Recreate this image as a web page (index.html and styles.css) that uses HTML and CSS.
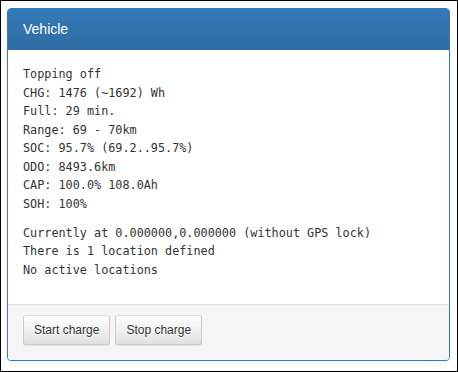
FILE: index.html
```html
<!DOCTYPE html>
<html lang="en">
<head>
    <meta charset="UTF-8">
    <meta name="viewport" content="width=device-width, initial-scale=1.0">
    <title>Vehicle</title>
    <link rel="stylesheet" href="styles.css">
</head>
<body>

<div class="frame">
    <div class="panel">
        <div class="panel-heading">
            <h3 class="panel-title">Vehicle</h3>
        </div>
        <div class="panel-body">
            <p>Topping off<br>
CHG: 1476 (~1692) Wh<br>
Full: 29 min.<br>
Range: 69 - 70km<br>
SOC: 95.7% (69.2..95.7%)<br>
ODO: 8493.6km<br>
CAP: 100.0% 108.0Ah<br>
SOH: 100%</p>
            <p>Currently at 0.000000,0.000000 (without GPS lock)<br>
There is 1 location defined<br>
No active locations</p>
        </div>
        <div class="panel-footer">
            <button class="btn">Start charge</button>
            <button class="btn">Stop charge</button>
        </div>
    </div>
</div>

</body>
</html>
```

FILE: styles.css
```css
* {
    box-sizing: border-box;
}
body {
    margin: 0;
    font-family: "Liberation Sans", Arial, sans-serif;
    color: #333;
    background-color: #fff;
}
.frame {
    width: 458px;
    height: 372px;
    border: 1px solid #000;
    padding: 7px 7px 10px 6px;
}
.panel {
    border: 1px solid #337ab7;
    border-radius: 4px;
    background-color: #fff;
    box-shadow: 0 1px 1px rgba(0, 0, 0, 0.05);
    overflow: hidden;
}
.panel-heading {
    padding: 10px 15px;
    color: #fff;
    background-image: linear-gradient(to bottom, #337ab7 0, #2e6da4 100%);
}
.panel-title {
    margin: 0;
    font-size: 14px;
    font-weight: normal;
    line-height: 21px;
}
.panel-body {
    padding: 15px;
    font-family: "DejaVu Sans Mono", "Liberation Mono", monospace;
    font-size: 11.8px;
    line-height: 18.57px;
}
.panel-body p {
    margin: 0 0 10px;
    white-space: nowrap;
}
.panel-footer {
    display: flex;
    gap: 5px;
    padding: 10px 15px 15px;
    background-color: #f5f5f5;
    border-top: 1px solid #ddd;
}
.btn {
    padding: 5px 10px;
    font-family: "Liberation Sans", Arial, sans-serif;
    font-size: 12px;
    line-height: 18px;
    color: #333;
    text-shadow: 0 1px 0 #fff;
    background-image: linear-gradient(to bottom, #fff 0, #e0e0e0 100%);
    border: 1px solid #ccc;
    border-color: #dbdbdb #ccc #ccc;
    border-radius: 3px;
    box-shadow: inset 0 1px 0 rgba(255, 255, 255, 0.15), 0 1px 1px rgba(0, 0, 0, 0.075);
    cursor: pointer;
}
```
